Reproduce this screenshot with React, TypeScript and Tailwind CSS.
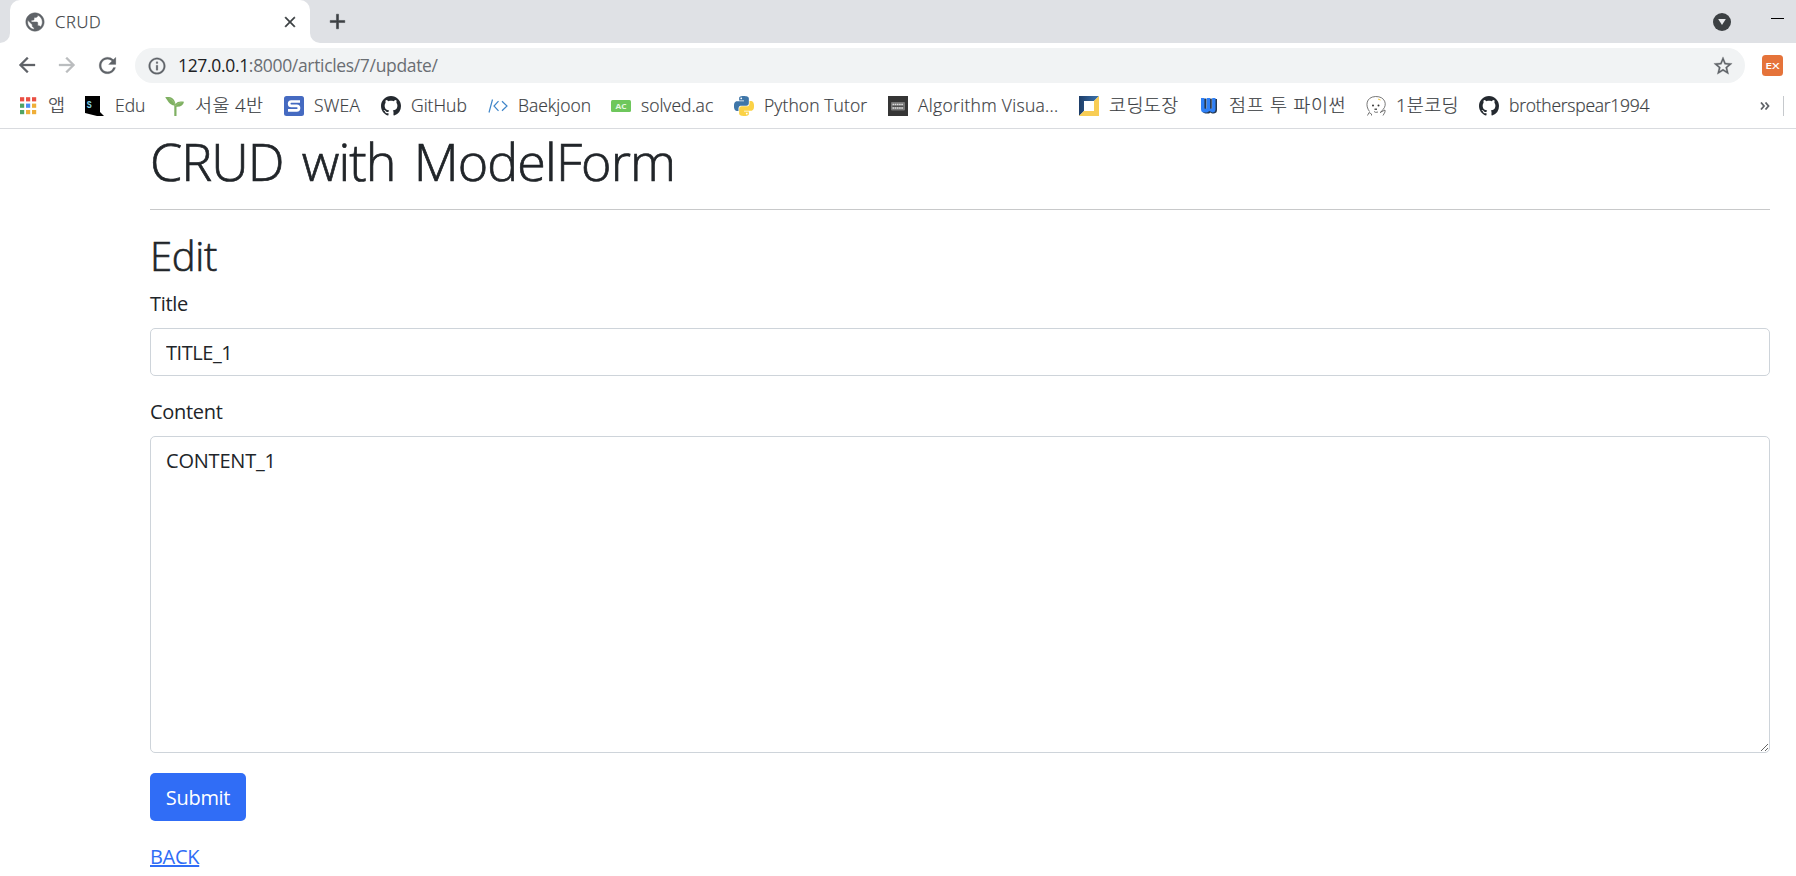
import type { ReactNode } from "react";
import { MdArrowBack, MdArrowForward, MdRefresh, MdStarBorder, MdInfoOutline, MdAdd, MdClose, MdPublic } from "react-icons/md";

const GITHUB =
  "M8 0C3.58 0 0 3.58 0 8c0 3.54 2.29 6.53 5.47 7.59.4.07.55-.17.55-.38 0-.19-.01-.82-.01-1.49-2.01.37-2.53-.49-2.69-.94-.09-.23-.48-.94-.82-1.13-.28-.15-.68-.52-.01-.53.63-.01 1.08.58 1.23.82.72 1.21 1.87.87 2.33.66.07-.52.28-.87.51-1.07-1.78-.2-3.64-.89-3.64-3.95 0-.87.31-1.59.82-2.15-.08-.2-.36-1.02.08-2.12 0 0 .67-.21 2.2.82.64-.18 1.32-.27 2-.27s1.36.09 2 .27c1.53-1.04 2.2-.82 2.2-.82.44 1.1.16 1.92.08 2.12.51.56.82 1.27.82 2.15 0 3.07-1.87 3.75-3.65 3.95.29.25.54.73.54 1.48 0 1.07-.01 1.93-.01 2.2 0 .21.15.46.55.38A8.01 8.01 0 0 0 16 8c0-4.42-3.58-8-8-8z";

const SNAKE =
  "M14.25.18l.9.2.73.26.59.3.45.32.34.34.25.34.16.33.1.3.04.26.02.2-.01.13V8.5l-.05.63-.13.55-.21.46-.26.38-.3.31-.33.25-.35.19-.35.14-.33.1-.3.07-.26.04-.21.02H8.77l-.69.05-.59.14-.5.22-.41.27-.33.32-.27.35-.2.36-.15.37-.1.35-.07.32-.04.27-.02.21v3.06H3.17l-.21-.03-.28-.07-.32-.12-.35-.18-.36-.26-.36-.36-.35-.46-.32-.59-.28-.73-.21-.88-.14-1.05-.05-1.23.06-1.22.16-1.04.24-.87.32-.71.36-.57.4-.44.42-.33.42-.24.4-.16.36-.1.32-.05.24-.01h.16l.06.01h8.16v-.83H6.18l-.01-2.75-.02-.37.05-.34.11-.31.17-.28.25-.26.31-.23.38-.2.44-.18.51-.15.58-.12.64-.1.71-.06.77-.04.84-.02 1.27.05zm-6.3 1.98l-.23.33-.08.41.08.41.23.34.33.22.41.09.41-.09.33-.22.23-.34.08-.41-.08-.41-.23-.33-.33-.22-.41-.09-.41.09z";

function Icon({ children, box = "0 0 20 20" }: { children: ReactNode; box?: string }) {
  return (
    <svg viewBox={box} className="h-5 w-5 shrink-0">
      {children}
    </svg>
  );
}

const Apps = () => {
  const colors = ["#ea4f43", "#ea4f43", "#ea4f43", "#4fa364", "#4a8df5", "#efae38", "#4fa364", "#efae38", "#efae38"];
  return (
    <Icon>
      {colors.map((c, i) => (
        <rect key={i} x={2 + (i % 3) * 6} y={1.2 + Math.floor(i / 3) * 6.4} width="4.2" height="4.2" fill={c} />
      ))}
    </Icon>
  );
};

const Edu = () => (
  <Icon>
    <path d="M1 0h15v16l4 4h-7l-12-3z" fill="#000" />
    <text x="2.8" y="12" fontSize="10.5" fontWeight="700" fontFamily="Liberation Mono, monospace" fill="#7fd3ea" textLength="5" lengthAdjust="spacingAndGlyphs">S</text>
  </Icon>
);

const Sprout = () => (
  <Icon>
    <path d="M.2 1.2c4.500-1 9.300.3 10.300 6.800 1.800-2.600 4.800-3 8.500-2.200-.8 3.800-3.500 5.300-7.500 5v9.200H9.300V9.600C4.700 9 3 5 .2 1.200z" fill="#7fb062" />
    <path d="M4 2.500c3 1 5.500 3.500 6.500 7.500 1.500-2 3.500-3 6-3.500" fill="none" stroke="#9dc581" strokeWidth=".7" />
  </Icon>
);

const Swea = () => (
  <Icon>
    <rect width="20" height="20" rx="2.500" fill="#456ac1" />
    <path d="M16 5.500H7.200C4.500 5.500 4.500 9.800 7.200 9.800h5.600c2.900 0 2.900 4.500 0 4.500H4" fill="none" stroke="#fff" strokeWidth="2.700" />
  </Icon>
);

const Github = () => (
  <Icon box="0 0 16 16">
    <path d={GITHUB} fill="#24292f" />
  </Icon>
);

const Baekjoon = () => (
  <Icon>
    <path d="M4.500 3.500L1 16.500M10.500 5.200L6 10l4.500 4.800M14 5.200l5 4.800-5 4.800" fill="none" stroke="#3f85c9" strokeWidth="1.200" />
  </Icon>
);

const Solved = () => (
  <Icon>
    <rect y="4" width="20" height="12" rx="1.500" fill="#6ec75c" />
    <text x="10" y="12.800" textAnchor="middle" fontSize="7.500" fontWeight="700" fontFamily="Open Sans, sans-serif" fill="#e6f7e1" textLength="11" lengthAdjust="spacingAndGlyphs">AC</text>
  </Icon>
);

const Python = () => (
  <Icon box="0 0 24 24">
    <path d={SNAKE} fill="#3f76a8" />
    <path d={SNAKE} fill="#fbd246" transform="rotate(180 12 12)" />
  </Icon>
);

const Algorithm = () => (
  <Icon>
    <rect width="20" height="20" fill="#353535" />
    <rect x="3" y="6" width="14" height="8.500" rx="1" fill="#777" />
    <path d="M4.500 8.500h11M4.500 12h11" stroke="#ddd" strokeWidth="1.300" strokeDasharray="1.600 .6" />
    <path d="M4.500 10.300h11" stroke="#444" strokeWidth="1" />
  </Icon>
);

const Dojang = () => (
  <Icon>
    <defs>
      <linearGradient id="navy" x2="1">
        <stop stopColor="#1d3d68" />
        <stop offset="1" stopColor="#3b74b0" />
      </linearGradient>
    </defs>
    <path d="M0 0h20L0 20z" fill="url(#navy)" />
    <path d="M20 0v20H0z" fill="#f8cd55" />
    <path d="M5 5h10v10H5z" fill="#fff" />
  </Icon>
);

const Wiki = () => (
  <Icon>
    <path d="M3 3h4.500v10h1V3h4v10h1V3H18v11q0 3-3 3.500h-2l-1.500-1-1.500 1H6.500Q3 16.500 3 14z" fill="#26384f" />
    <path d="M2 2h3.600v10.500h2V2h3.600v10.500h2V2h3.300v12q-.5 2.500-3 2.500L10.500 15 8 16.500H5Q2 16.500 2 13z" fill="#2f80f6" />
    <path d="M6.300 2.500v10M12 2.500v10" stroke="#26384f" strokeWidth="1.200" />
  </Icon>
);

const Doodle = () => (
  <Icon>
    <path
      d="M3.500 15.500C-.8 10-.2 1 9.500.5c9.800-.3 12 8.500 7.500 13l-2.500 3M1.500 19.500l1.500-3 2.500 1.500v1.500M14 16.500l5-2.500v2l-2 3.500M8 15.500q1.500 1.500 4 .5"
      fill="none"
      stroke="#555"
      strokeWidth=".8"
    />
    <circle cx="7" cy="9.500" r="1" fill="#333" />
    <circle cx="12.500" cy="9.500" r="1" fill="#333" />
    <path d="M8.500 12.500h2.500v1.500H8.500z" fill="#555" />
    <path d="M12 3l2.500 1" stroke="#efc94c" strokeWidth="1" />
  </Icon>
);

interface Bookmark {
  label: string;
  icon: ReactNode;
  box: string;
  text: string;
}

const LATIN = "mb-[2px] text-[17.5px]";
const KOREAN = "mb-[3px] text-[18.5px]";

const bookmarks: Bookmark[] = [
  { label: "앱", icon: <Apps />, box: "w-[66px]", text: KOREAN },
  { label: "Edu", icon: <Edu />, box: "w-[81px]", text: `${LATIN} pl-px` },
  { label: "서울 4반", icon: <Sprout />, box: "w-[119px]", text: `${KOREAN} tracking-[0.4px]` },
  { label: "SWEA", icon: <Swea />, box: "w-[97px]", text: `${LATIN} tracking-[0.2px]` },
  { label: "GitHub", icon: <Github />, box: "w-[107px]", text: LATIN },
  { label: "Baekjoon", icon: <Baekjoon />, box: "w-[123px]", text: LATIN },
  { label: "solved.ac", icon: <Solved />, box: "w-[123px]", text: LATIN },
  { label: "Python Tutor", icon: <Python />, box: "w-[154px]", text: `${LATIN} tracking-[0.1px]` },
  { label: "Algorithm Visua...", icon: <Algorithm />, box: "w-[191px]", text: `${LATIN} tracking-[0.3px]` },
  { label: "코딩도장", icon: <Dojang />, box: "w-[120px]", text: `${KOREAN} tracking-[0.4px]` },
  { label: "점프 투 파이썬", icon: <Wiki />, box: "w-[167px]", text: `${KOREAN} tracking-[0.7px]` },
  { label: "1분코딩", icon: <Doodle />, box: "w-[113px]", text: `${KOREAN} tracking-[0.3px]` },
  { label: "brotherspear1994", icon: <Github />, box: "w-[180px]", text: `${LATIN} tracking-[-0.25px]` },
];

function TabStrip() {
  return (
    <div className="flex h-[43px] bg-[#dfe1e5]">
      <div className="flex w-[10px] bg-white">
        <div className="w-full rounded-br-[10px] bg-[#dfe1e5]" />
      </div>
      <div className="bg-[#dfe1e5]">
        <div className="flex h-[43px] w-[300px] items-center rounded-t-[10px] bg-white pr-[11px] pl-[14px]">
          <MdPublic className="h-[22px] w-[22px] text-[#5f6368] [&_path[fill=none]]:hidden" strokeWidth={0.5} />
          <span className="ml-[9px] flex-1 text-[16.5px] leading-6 font-light tracking-[0.7px] text-[#3c4043] [-webkit-text-stroke:0.25px]">CRUD</span>
          <MdClose className="h-[18px] w-[18px] text-[#3c4043] [&_path[fill=none]]:hidden" strokeWidth={0.5} />
        </div>
      </div>
      <div className="flex flex-1 bg-white">
        <div className="flex flex-1 items-center rounded-bl-[10px] bg-[#dfe1e5] pr-3 pl-[15px]">
          <MdAdd className="h-[25px] w-[25px] text-[#3c4043] [&_path[fill=none]]:hidden" strokeWidth={0.5} />
          <svg viewBox="0 0 18 18" className="ml-auto h-[18px] w-[18px]">
            <circle cx="9" cy="9" r="9" fill="#3c4043" />
            <path d="M5.2 6h7.600L9 12z" fill="#e8eaed" />
          </svg>
          <div className="mb-[6px] ml-10 h-px w-[13px] bg-black" />
        </div>
      </div>
    </div>
  );
}

function Toolbar() {
  return (
    <div className="flex h-[45px] items-center pl-[15px]">
      <MdArrowBack className="mb-px h-6 w-6 text-[#5f6368] [&_path[fill=none]]:hidden" strokeWidth={0.3} />
      <MdArrowForward className="mb-px ml-4 h-6 w-6 text-[#bbbdbf] [&_path[fill=none]]:hidden" strokeWidth={0.3} />
      <MdRefresh className="mb-px ml-4 h-[25px] w-[25px] text-[#5f6368] [&_path[fill=none]]:hidden" strokeWidth={0.2} />
      <div className="ml-[15px] flex h-[35px] w-[1610px] items-center rounded-full bg-[#f1f3f4] pr-[11px] pl-3">
        <MdInfoOutline className="h-5 w-5 text-[#5f6368] [&_path[fill=none]]:hidden" strokeWidth={0.3} />
        <span className="mb-px ml-[11px] flex-1 text-[17.5px] leading-6 tracking-[-0.33px] text-[#6a6e73]">
          <span className="text-[#202124]">127.0.0.1</span>:8000/articles/7/update/
        </span>
        <MdStarBorder className="h-[22px] w-[22px] text-[#5f6368] [&_path[fill=none]]:hidden" strokeWidth={0.3} />
      </div>
      <svg viewBox="0 0 21 21" className="ml-[17px] h-[21px] w-[21px]">
        <rect width="21" height="21" rx="3.500" fill="#e5733a" />
        <text x="10.500" y="13.500" textAnchor="middle" fontSize="9" fontWeight="600" fontFamily="Open Sans, sans-serif" fill="#fff" textLength="14.500" lengthAdjust="spacingAndGlyphs">EX</text>
      </svg>
    </div>
  );
}

function BookmarkBar() {
  return (
    <div className="flex h-[41px] items-center border-b border-[#d9dbdf] pb-1 pl-[18px]">
      {bookmarks.map((b) => (
        <div key={b.label} className={`flex shrink-0 items-center ${b.box}`}>
          {b.icon}
          <span className={`ml-[10px] leading-6 font-light whitespace-nowrap text-[#3c4043] [-webkit-text-stroke:0.2px] ${b.text}`}>{b.label}</span>
        </div>
      ))}
      <svg viewBox="0 0 10 8" className="ml-[101px] h-2 w-[10px]">
        <path d="M1 .5L4 4 1 7.500M5.500.5l3 3.500-3 3.500" fill="none" stroke="#5f6368" strokeWidth="1.800" />
      </svg>
      <div className="ml-[13px] h-5 w-px bg-[#c6c9cd]" />
    </div>
  );
}

export default function App() {
  return (
    <div className="flex h-[876px] w-[1796px] flex-col overflow-hidden bg-white font-['Open_Sans','Noto_Sans_CJK_KR',sans-serif]">
      <TabStrip />
      <Toolbar />
      <BookmarkBar />
      <main className="ml-[150px] flex w-[1620px] flex-col text-[20px] leading-[30px] tracking-[-0.3px] text-[#212529]">
        <h1 className="mt-[2px] text-[52px] leading-[60px] font-light tracking-[-0.9px] [-webkit-text-stroke:0.7px] [word-spacing:5.5px]">CRUD with ModelForm</h1>
        <hr className="mt-[18px] border-[#c8c9ca]" />
        <h2 className="mt-[21px] text-[40px] leading-[50px] font-light [-webkit-text-stroke:0.6px]">Edit</h2>
        <label className="mt-2">Title</label>
        <input defaultValue="TITLE_1" className="mt-[9px] h-12 rounded-[5px] border border-[#ced4da] px-[15px] pt-px tracking-[-0.45px]" />
        <label className="mt-[21px]">Content</label>
        <textarea defaultValue="CONTENT_1" className="mt-[9px] block h-[317px] resize-y rounded-[5px] border border-[#ced4da] px-[15px] pt-[9px] pb-2 tracking-[-0.2px]" />
        <button className="mt-5 h-12 w-24 rounded-[5px] bg-[#306df6] pt-[2px] text-white">Submit</button>
        <a className="mt-[21px] self-start text-[#306df6] underline">BACK</a>
      </main>
    </div>
  );
}
